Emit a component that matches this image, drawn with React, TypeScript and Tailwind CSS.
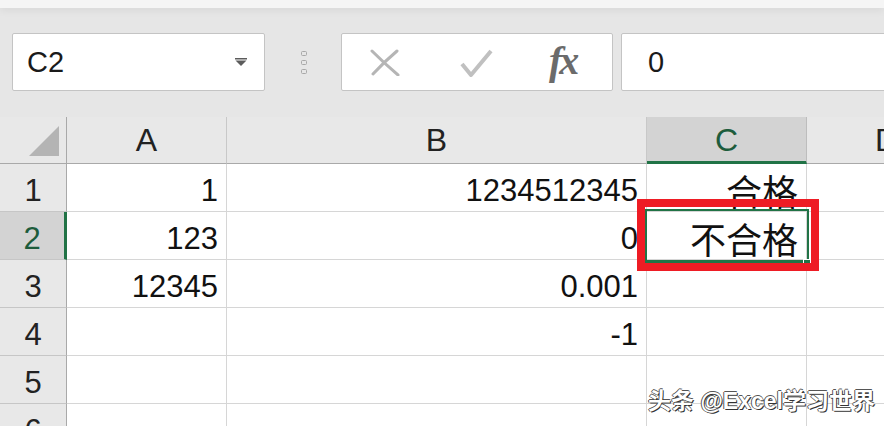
const rows = [
  { n: 1, a: "1", b: "1234512345", c: "合格" },
  { n: 2, a: "123", b: "0", c: "不合格" },
  { n: 3, a: "12345", b: "0.001", c: "" },
  { n: 4, a: "", b: "-1", c: "" },
  { n: 5, a: "", b: "", c: "" },
  { n: 6, a: "", b: "", c: "" },
];

const cols = "grid grid-cols-[67px_160px_420px_160px_160px]";

function Cell({ text, cjk }: { text: string; cjk?: boolean }) {
  return (
    <div className="h-[48px] bg-white border-r border-b border-[#d6d6d6] flex items-end justify-end pr-[8px] pb-[5px] overflow-visible whitespace-nowrap">
      <span
        className={
          cjk
            ? "text-[36px] leading-none text-[#111] [font-family:'Noto_Sans_CJK_SC',sans-serif] mb-[-2px]"
            : "text-[31px] leading-none text-[#111]"
        }
      >
        {text}
      </span>
    </div>
  );
}

export default function App() {
  return (
    <div className="relative w-[884px] h-[426px] overflow-hidden bg-[#e6e6e6] [font-family:'Liberation_Sans',Arial,sans-serif]">
      {/* top strip */}
      <div className="h-[8px] bg-[#f5f5f5] shadow-[0_2px_8px_rgba(0,0,0,0.07)]" />

      {/* formula bar */}
      <div className="flex items-center mt-[25px] h-[58px]">
        <div className="shrink-0 ml-[12px] w-[253px] h-[58px] bg-white border border-[#c4c4c4] rounded-[2px] flex items-center justify-between pl-[14px] pr-[17px]">
          <span className="text-[29px] text-[#1a1a1a] leading-none">C2</span>
          <svg width="12" height="8" viewBox="0 0 12 8">
            <rect x="0" y="0" width="12" height="1.5" fill="#5c5c5c" />
            <path d="M0.5 2.5 L11.5 2.5 L6 8 Z" fill="#5c5c5c" />
          </svg>
        </div>

        <div className="shrink-0 ml-[36px] w-[6px] flex flex-col gap-[4px]">
          {[0, 1, 2].map((i) => (
            <svg key={i} width="6" height="5" viewBox="0 0 6 5">
              <rect x="0.5" y="0.5" width="5" height="4" rx="1" fill="none" stroke="#a8a8a8" strokeWidth="1" />
            </svg>
          ))}
        </div>

        <div className="shrink-0 ml-[34px] w-[272px] h-[58px] bg-white border border-[#c4c4c4] rounded-[2px] flex items-center">
          <svg className="ml-[28px]" width="30" height="27" viewBox="0 0 30 27">
            <path d="M2 2 Q14 14 28 26" stroke="#b5b5b5" strokeWidth="3" fill="none" strokeLinecap="round" />
            <path d="M27 2 Q14 13 3 25" stroke="#b5b5b5" strokeWidth="3" fill="none" strokeLinecap="round" />
          </svg>
          <svg className="ml-[60px] mt-[2px]" width="33" height="28" viewBox="0 0 33 28">
            <path d="M2 15 L11 26 L31 2" stroke="#c0c0c0" strokeWidth="4" fill="none" strokeLinejoin="round" />
          </svg>
          <span className="ml-[56px] mb-[2px] text-[40px] leading-none italic font-semibold text-[#6b6b6b] [font-family:'Liberation_Serif',serif] tracking-[-3px]">
            fx
          </span>
        </div>

        <div className="shrink-0 ml-[8px] w-[300px] h-[58px] bg-white border border-[#c4c4c4] rounded-[2px] flex items-center pl-[26px]">
          <span className="text-[29px] text-[#1a1a1a] leading-none">0</span>
        </div>
      </div>

      {/* grid */}
      <div className="relative mt-[26px]">
        <div className={cols}>
          <div className="h-[47px] bg-[#e8e8e8] border-r border-b border-r-[#a9a9a9] border-b-[#a9a9a9] flex items-end justify-end pr-[7px] pb-[7px]">
            <svg width="30" height="30" viewBox="0 0 30 30">
              <path d="M30 0 L30 30 L0 30 Z" fill="#b4b4b4" />
            </svg>
          </div>
          {["A", "B", "C", "D"].map((l) => (
            <div
              key={l}
              className={
                l === "C"
                  ? "h-[47px] bg-[#d3d3d3] border-r border-r-[#bdbdbd] border-b-[3px] border-b-[#217346] flex items-end justify-center pb-[5px]"
                  : "h-[47px] bg-[#e8e8e8] border-r border-r-[#c8c8c8] border-b border-b-[#a9a9a9] flex items-end justify-center pb-[7px]"
              }
            >
              <span className={l === "C" ? "text-[32px] leading-none text-[#1d5c3c]" : "text-[32px] leading-none text-[#222]"}>
                {l}
              </span>
            </div>
          ))}

          {rows.map((r) => (
            <div key={r.n} className="contents">
              <div
                className={
                  r.n === 2
                    ? "h-[48px] bg-[#d3d3d3] border-r-[3px] border-r-[#217346] border-b border-b-[#c6c6c6] flex items-end justify-center pb-[5px]"
                    : "h-[48px] bg-[#e8e8e8] border-r border-r-[#a9a9a9] border-b border-b-[#c6c6c6] flex items-end justify-center pb-[5px]"
                }
              >
                <span className={r.n === 2 ? "text-[31px] leading-none text-[#1d5c3c]" : "text-[31px] leading-none text-[#222]"}>
                  {r.n}
                </span>
              </div>
              <Cell text={r.a} />
              <Cell text={r.b} />
              <Cell text={r.c} cjk />
              <Cell text="" />
            </div>
          ))}
        </div>

        {/* active cell */}
        <div className="absolute left-[645px] top-[92px] w-[164px] h-[54px] border-2 border-b-[3px] border-[#217346]" />
        <div className="absolute left-[803px] top-[142px] w-[8px] h-[8px] bg-[#217346] border border-white" />

        {/* red highlight */}
        <div className="absolute left-[637px] top-[82px] w-[182px] h-[72px] border-[8px] border-[#ee1c24]" />
      </div>

      {/* watermark */}
      <div className="absolute left-[648px] top-[390px] text-[23px] leading-none font-bold text-white whitespace-nowrap [font-family:'Liberation_Sans','Noto_Sans_CJK_SC',sans-serif] [text-shadow:1px_1px_0_#333,-1px_0_0_#555,0_-1px_0_#555]">
        头条 @Excel学习世界
      </div>
    </div>
  );
}
